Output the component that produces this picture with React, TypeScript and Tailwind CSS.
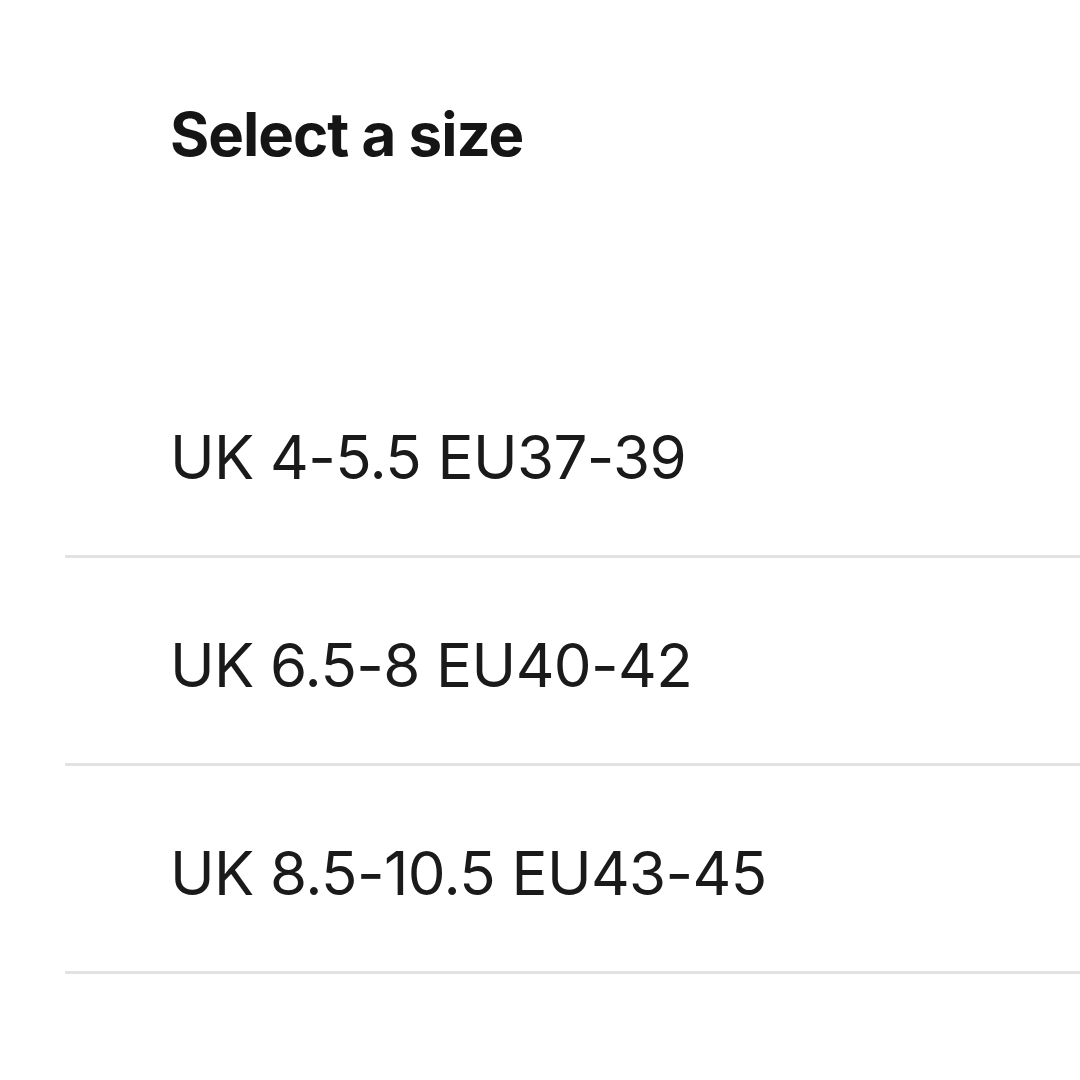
export default function App() {
  const sizes = ["UK 4-5.5 EU37-39", "UK 6.5-8 EU40-42", "UK 8.5-10.5 EU43-45"];
  return (
    <div
      className="w-[1080px] h-[1080px] bg-white overflow-hidden pl-[65px] pt-[104px]"
      style={{ fontFamily: "Inter, 'Noto Sans', sans-serif" }}
    >
      <div className="pl-[105px] text-[60px] leading-[60px] font-bold tracking-[-1px] text-[#151515] mb-[186px]">
        Select a size
      </div>
      <div className="flex flex-col">
        {sizes.map((s, i) => (
          <div
            key={s}
            className={`pl-[105px] ${i === 0 ? "pt-[77px]" : "pt-[77px]"} pb-[68px] border-b-[3px] border-[#e2e2e2] text-[60px] leading-[60px] tracking-[-0.6px] text-[#1a1a1a]`}
          >
            {s}
          </div>
        ))}
      </div>
    </div>
  );
}
